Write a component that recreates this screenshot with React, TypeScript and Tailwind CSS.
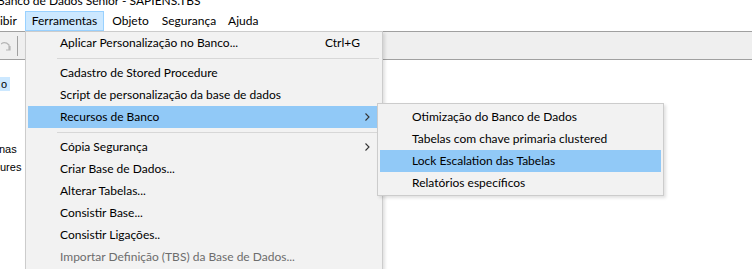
import React from "react";

type Item = { label: string; shortcut?: string; sub?: boolean; active?: boolean; disabled?: boolean } | "sep";

const mainItems: Item[] = [
  { label: "Aplicar Personalização no Banco...", shortcut: "Ctrl+G" },
  "sep",
  { label: "Cadastro de Stored Procedure" },
  { label: "Script de personalização da base de dados" },
  { label: "Recursos de Banco", sub: true, active: true },
  "sep",
  { label: "Cópia Segurança", sub: true },
  { label: "Criar Base de Dados..." },
  { label: "Alterar Tabelas..." },
  { label: "Consistir Base..." },
  { label: "Consistir Ligações.." },
  { label: "Importar Definição (TBS) da Base de Dados...", disabled: true },
];

const subItems: Item[] = [
  { label: "Otimização do Banco de Dados" },
  { label: "Tabelas com chave primaria clustered" },
  { label: "Lock Escalation das Tabelas", active: true },
  { label: "Relatórios específicos" },
];

function Chevron() {
  return (
    <svg width="5" height="8" viewBox="0 0 5 8" className="shrink-0">
      <path d="M0.5 0.5 L4 4 L0.5 7.5" fill="none" stroke="#333" strokeWidth="1.1" />
    </svg>
  );
}

function MenuRows({ items }: { items: Item[] }) {
  return (
    <>
      {items.map((it, i) =>
        it === "sep" ? (
          <div key={i} className="h-[8px] flex items-center pl-[29px] pr-[1px]">
            <div className="h-px w-full bg-[#d7d7d7]" />
          </div>
        ) : (
          <div
            key={i}
            className={`h-[22px] flex items-center pl-[32px] pr-[10px] ${it.active ? "bg-[#91c9f7]" : ""} ${
              it.disabled ? "text-[#6d6d6d]" : "text-black"
            }`}
          >
            <span className="flex-1 whitespace-nowrap">{it.label}</span>
            {it.shortcut && <span className="mr-[10px]">{it.shortcut}</span>}
            {it.sub && <Chevron />}
          </div>
        )
      )}
    </>
  );
}

export default function App() {
  return (
    <div
      className="relative w-[752px] h-[269px] overflow-hidden bg-white text-[12px] leading-none"
      style={{ fontFamily: 'Lato, "Noto Sans", sans-serif' }}
    >
      {/* title bar, cut at top */}
      <div className="h-[10px] overflow-hidden">
        <div className="-mt-[7px] -ml-[3px] whitespace-nowrap leading-[16px] text-black">
          Banco de Dados Senior - SAPIENS.TBS
        </div>
      </div>

      {/* menu bar */}
      <div className="h-[21px] flex items-stretch overflow-hidden pt-[1px]">
        <div className="flex items-center pr-[8px] -ml-[13px]">Exibir</div>
        <div className="flex items-center px-[6px] bg-[#cce8ff] border border-[#99d1ff]">Ferramentas</div>
        <div className="flex items-center px-[7px] ml-[1px]">Objeto</div>
        <div className="flex items-center px-[6px]">Segurança</div>
        <div className="flex items-center px-[6px]">Ajuda</div>
      </div>

      {/* toolbar */}
      <div className="h-[29px] bg-[#efefef] border-t border-[#a0a0a0] border-b flex items-center">
        <svg width="10" height="10" viewBox="0 0 10 10" className="ml-[1px]">
          <path d="M0 3 Q4 0 8 4 L8 9 M5 9 L9 9 L9 5" fill="none" stroke="#b5b5b5" strokeWidth="1.2" />
        </svg>
        <div className="ml-[6px] w-px h-[20px] bg-[#a0a0a0]" />
      </div>

      {/* body */}
      <div className="flex text-[11px]" style={{ fontFamily: '"Liberation Sans", Arial, sans-serif' }}>
        <div className="w-[25px] flex flex-col">
          <div className="mt-[17px] h-[14px] w-[10px] bg-[#cce8ff] flex items-center pl-[1px]">o</div>
          <div className="mt-[49px] h-[18px] flex items-center -ml-[1px] whitespace-nowrap">nas</div>
          <div className="h-[18px] flex items-center whitespace-nowrap">ures</div>
        </div>
      </div>

      {/* Ferramentas drop-down */}
      <div className="absolute left-[25px] top-[31px] w-[358px] h-[250px] bg-[#f2f2f2] border border-[#cccccc] px-[2px] pt-[0px] shadow-[2px_2px_3px_rgba(0,0,0,0.12)]">
        <MenuRows items={mainItems} />
      </div>

      {/* Recursos de Banco submenu */}
      <div className="absolute left-[377px] top-[103px] w-[287px] bg-[#f2f2f2] border border-[#cccccc] px-[2px] pt-[2px] pb-[1px] shadow-[2px_2px_3px_rgba(0,0,0,0.12)]">
        <MenuRows items={subItems} />
      </div>
    </div>
  );
}
